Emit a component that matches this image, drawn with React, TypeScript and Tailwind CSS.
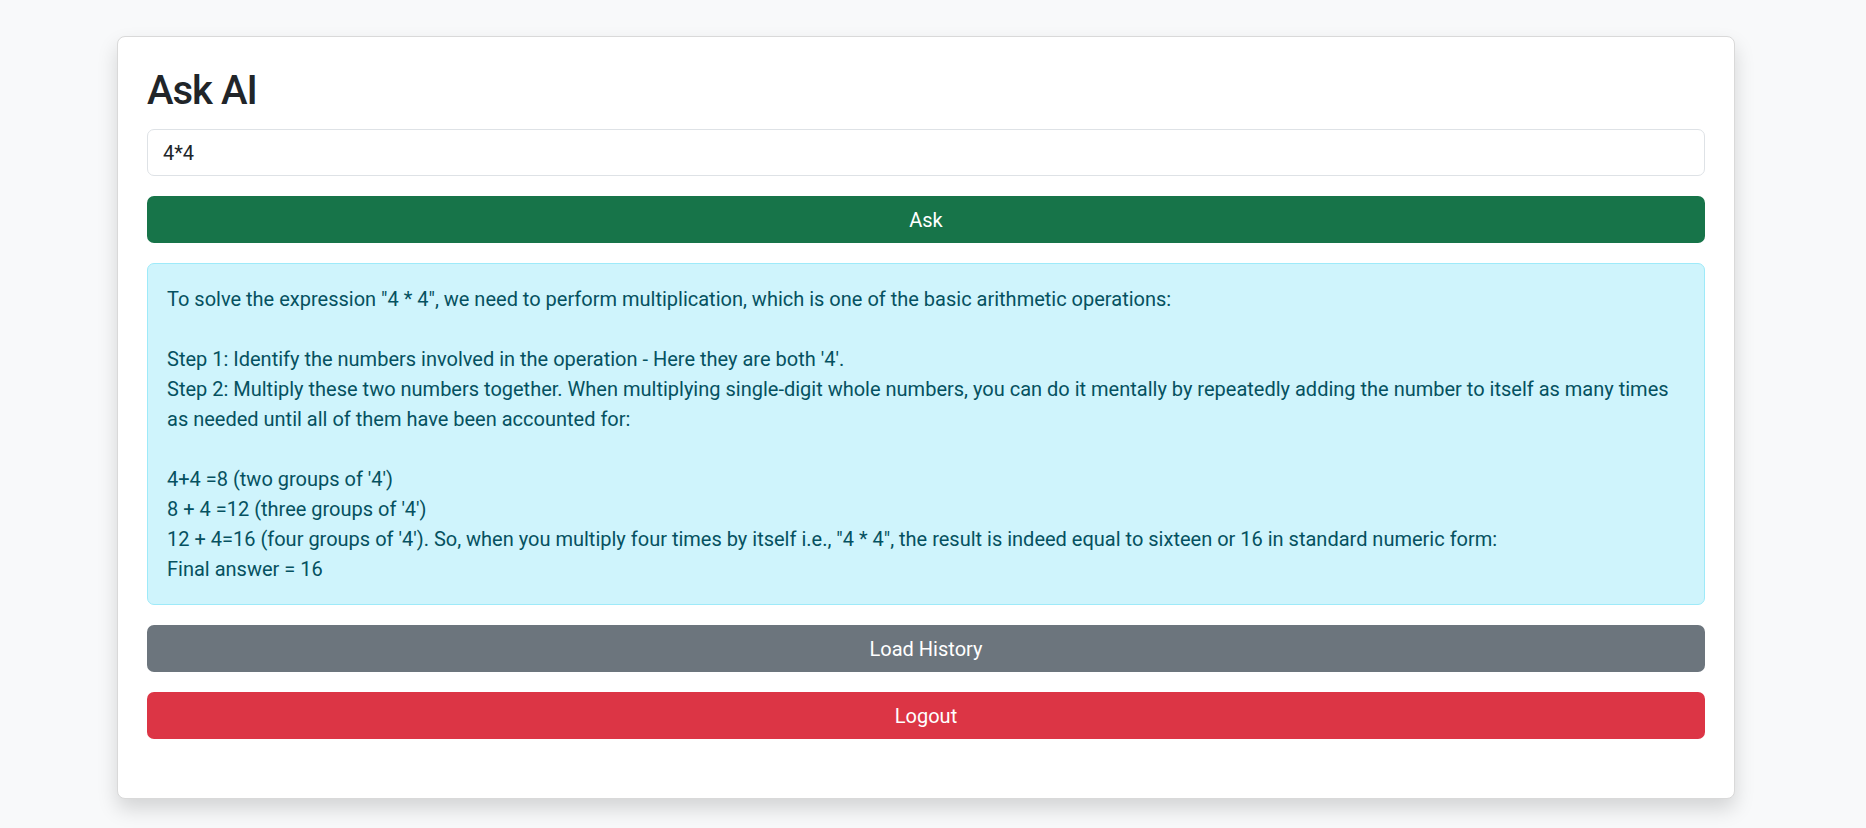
import { useState } from "react";

const answer = `To solve the expression "4 * 4", we need to perform multiplication, which is one of the basic arithmetic operations:

Step 1: Identify the numbers involved in the operation - Here they are both '4'.
Step 2: Multiply these two numbers together. When multiplying single-digit whole numbers, you can do it mentally by repeatedly adding the number to itself as many times as needed until all of them have been accounted for:

4+4 =8 (two groups of '4')
8 + 4 =12 (three groups of '4')
12 + 4=16 (four groups of '4'). So, when you multiply four times by itself i.e., "4 * 4", the result is indeed equal to sixteen or 16 in standard numeric form:
Final answer = 16`;

export default function App() {
  const [question, setQuestion] = useState("4*4");

  return (
    <div className="min-h-screen bg-[#f8f9fa] pt-[36px] pl-[117px] font-['Roboto',sans-serif] text-[#212529]">
      <div className="w-[1618px] rounded-[8px] border border-[#d9d9d9] bg-white px-[29px] pt-[30px] pb-[59px] shadow-[0_10px_20px_rgba(0,0,0,0.15)]">
        <h2 className="mb-[14px] text-[40px] leading-[48px] font-medium tracking-[-1px]">Ask AI</h2>
        <input
          className="mb-[20px] block h-[47px] w-full rounded-[7px] border border-[#dee2e6] px-[15px] text-[20px] outline-none"
          value={question}
          onChange={(e) => setQuestion(e.target.value)}
        />
        <button className="mb-[20px] block h-[47px] w-full rounded-[7px] bg-[#177449] text-[20px] text-white">
          Ask
        </button>
        <div className="mb-[20px] rounded-[7px] border border-[#9eeaf9] bg-[#cff4fc] px-[19px] py-[20px] text-[20px] leading-[30px] whitespace-pre-wrap text-[#055160]">
          {answer}
        </div>
        <button className="mb-[20px] block h-[47px] w-full rounded-[7px] bg-[#6c757d] text-[20px] text-white">
          Load History
        </button>
        <button className="block h-[47px] w-full rounded-[7px] bg-[#dc3545] text-[20px] text-white">
          Logout
        </button>
      </div>
    </div>
  );
}
